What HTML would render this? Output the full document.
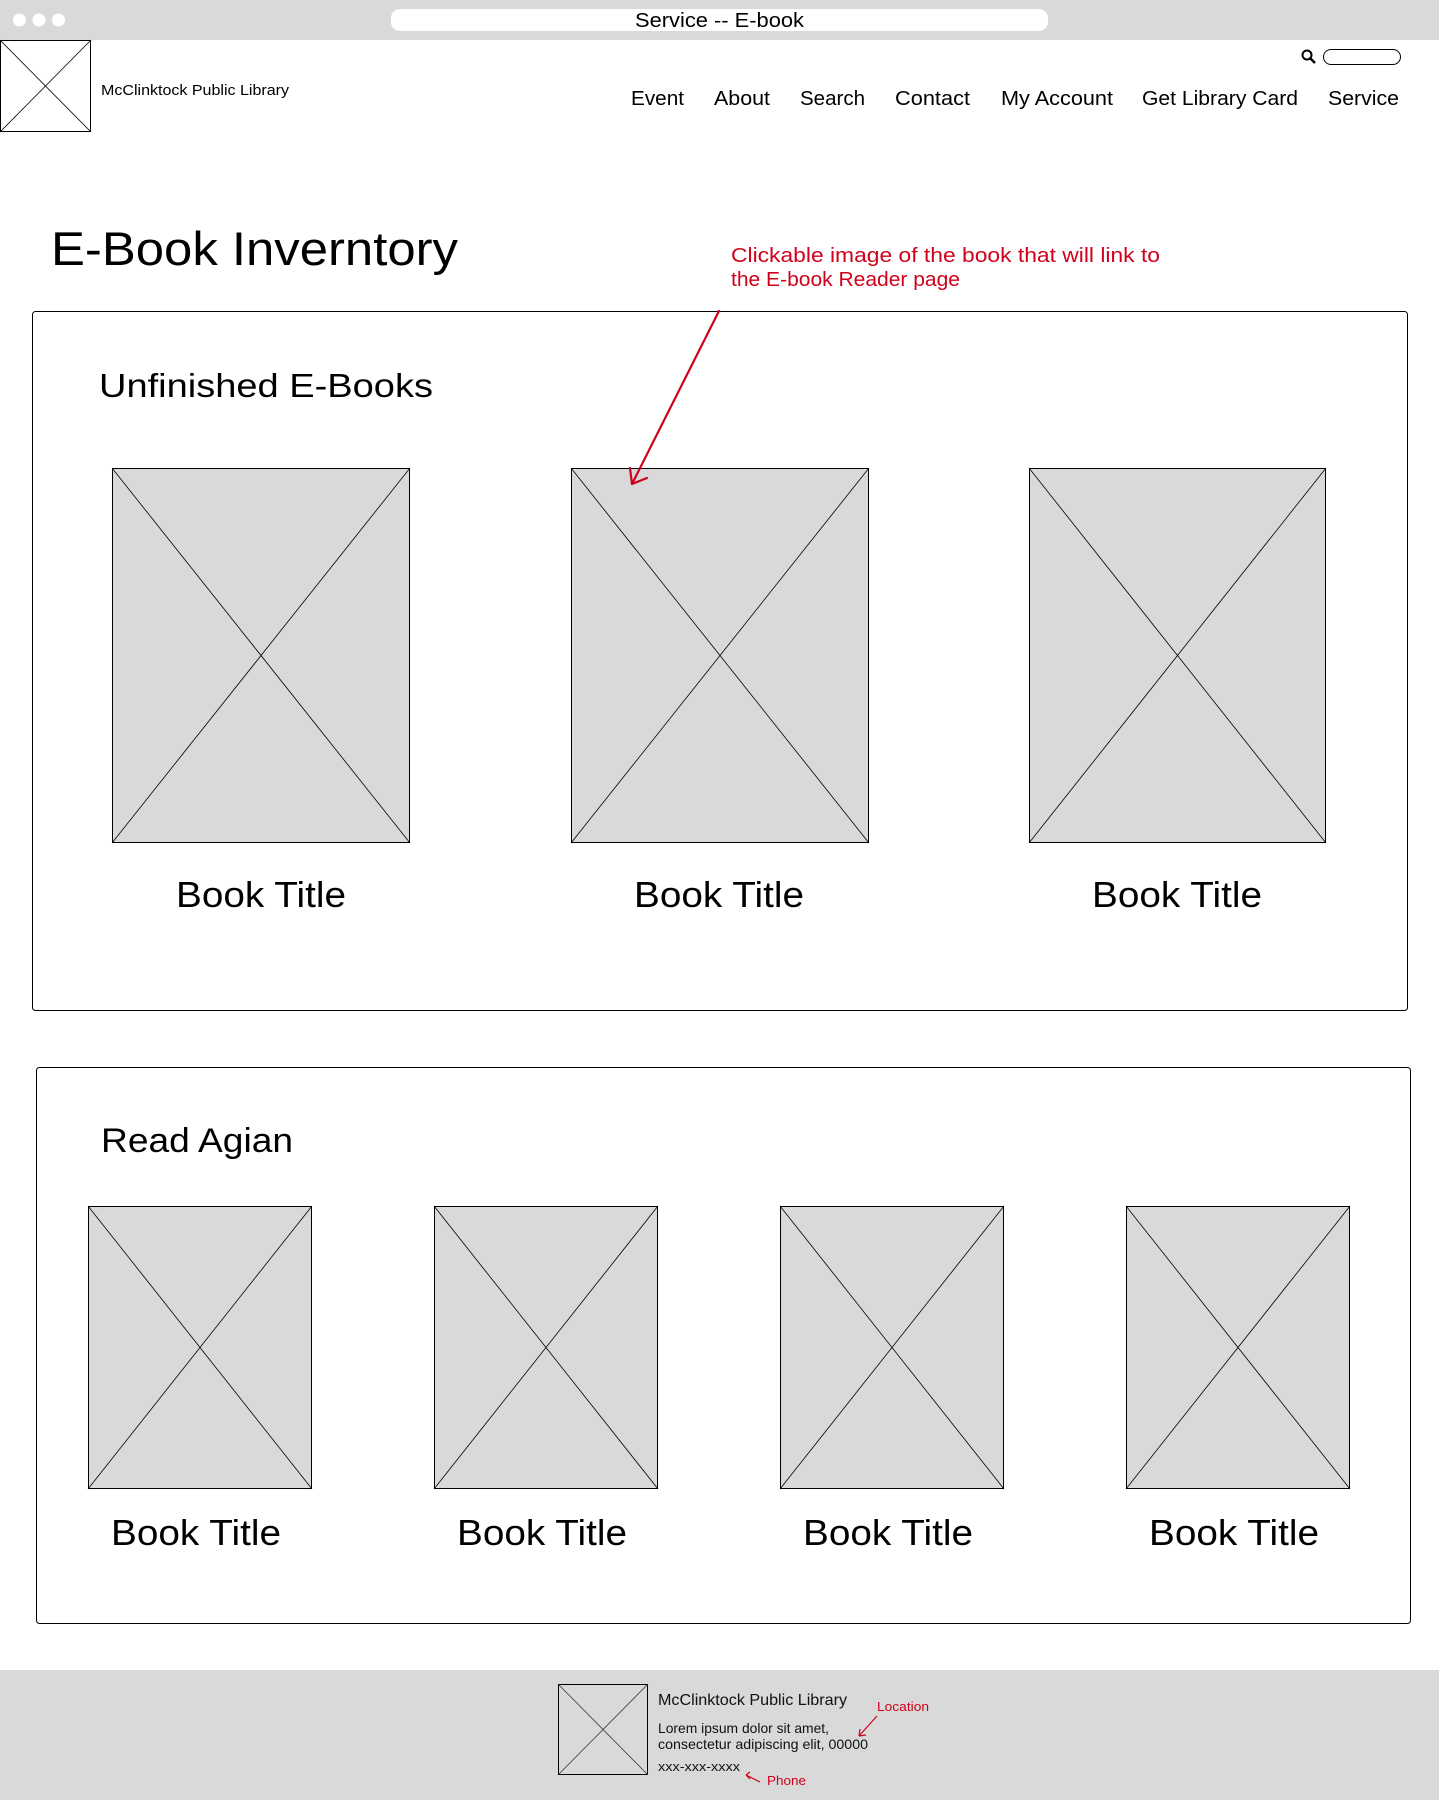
<!DOCTYPE html>
<html><head><meta charset="utf-8"><style>
html,body{margin:0;padding:0;background:#fff;}
svg{display:block;font-family:"Liberation Sans",sans-serif;}
</style></head><body>
<svg width="1439" height="1800" viewBox="0 0 1439 1800" xmlns="http://www.w3.org/2000/svg">
<rect x="0" y="0" width="1439" height="40" fill="#d9d9d9"/>
<circle cx="19.5" cy="20" r="6.5" fill="#fff"/>
<circle cx="39" cy="20" r="6.5" fill="#fff"/>
<circle cx="58.5" cy="20" r="6.5" fill="#fff"/>
<rect x="391" y="9" width="657" height="22" rx="9" fill="#fff"/>
<text x="635" y="27" font-size="20" textLength="169" lengthAdjust="spacingAndGlyphs" fill="#000">Service -- E-book</text>
<!-- logo -->
<rect x="0.5" y="40.5" width="90" height="91" fill="#fff" stroke="#000" stroke-width="1"/>
<path d="M0 40L91 132M91 40L0 132" stroke="#000" stroke-width="0.8"/>
<text x="101" y="95" font-size="15" textLength="188" lengthAdjust="spacingAndGlyphs" fill="#000">McClinktock Public Library</text>
<!-- search -->
<circle cx="1307" cy="55" r="4.5" fill="none" stroke="#000" stroke-width="2"/>
<path d="M1310 58L1315 63" stroke="#000" stroke-width="2.5"/>
<rect x="1323.5" y="49.5" width="77" height="15" rx="7.5" fill="#fff" stroke="#000" stroke-width="1"/>
<g font-size="20" fill="#000">
<text x="631" y="105" textLength="53" lengthAdjust="spacingAndGlyphs">Event</text>
<text x="714" y="105" textLength="56" lengthAdjust="spacingAndGlyphs">About</text>
<text x="800" y="105" textLength="65" lengthAdjust="spacingAndGlyphs">Search</text>
<text x="895" y="105" textLength="75" lengthAdjust="spacingAndGlyphs">Contact</text>
<text x="1001" y="105" textLength="112" lengthAdjust="spacingAndGlyphs">My Account</text>
<text x="1142" y="105" textLength="156" lengthAdjust="spacingAndGlyphs">Get Library Card</text>
<text x="1328" y="105" textLength="71" lengthAdjust="spacingAndGlyphs">Service</text>
</g>
<text x="51" y="265" font-size="47" textLength="407" lengthAdjust="spacingAndGlyphs" fill="#000">E-Book Inverntory</text>
<g font-size="20" fill="#d0021b">
<text x="731" y="262" textLength="429" lengthAdjust="spacingAndGlyphs">Clickable  image  of  the  book  that  will  link  to</text>
<text x="731" y="286" textLength="229" lengthAdjust="spacingAndGlyphs">the E-book Reader page</text>
</g>
<!-- box 1 -->
<rect x="32.5" y="311.5" width="1375" height="699" rx="3" fill="none" stroke="#000" stroke-width="1"/>
<text x="99" y="397" font-size="33" textLength="334" lengthAdjust="spacingAndGlyphs" fill="#000">Unfinished E-Books</text>
<g stroke="#000" stroke-width="1" fill="#d9d9d9">
<rect x="112.5" y="468.5" width="297" height="374"/>
<rect x="571.5" y="468.5" width="297" height="374"/>
<rect x="1029.5" y="468.5" width="296" height="374"/>
<path d="M112 468L410 843M410 468L112 843M571 468L869 843M869 468L571 843M1029 468L1326 843M1326 468L1029 843" stroke-width="0.8" fill="none"/>
</g>
<g font-size="36" fill="#000">
<text x="176" y="907" textLength="170" lengthAdjust="spacingAndGlyphs">Book Title</text>
<text x="634" y="907" textLength="170" lengthAdjust="spacingAndGlyphs">Book Title</text>
<text x="1092" y="907" textLength="170" lengthAdjust="spacingAndGlyphs">Book Title</text>
</g>
<!-- arrow -->
<path d="M719 311L632 484M632 484L630 468M632 484L647 478" stroke="#d0021b" stroke-width="2.2" fill="none" stroke-linecap="round"/>
<!-- box 2 -->
<rect x="36.5" y="1067.5" width="1374" height="556" rx="3" fill="none" stroke="#000" stroke-width="1"/>
<text x="101" y="1152" font-size="34" textLength="192" lengthAdjust="spacingAndGlyphs" fill="#000">Read Agian</text>
<g stroke="#000" stroke-width="1" fill="#d9d9d9">
<rect x="88.5" y="1206.5" width="223" height="282"/>
<rect x="434.5" y="1206.5" width="223" height="282"/>
<rect x="780.5" y="1206.5" width="223" height="282"/>
<rect x="1126.5" y="1206.5" width="223" height="282"/>
<path d="M88 1206L312 1489M312 1206L88 1489M434 1206L658 1489M658 1206L434 1489M780 1206L1004 1489M1004 1206L780 1489M1126 1206L1350 1489M1350 1206L1126 1489" stroke-width="0.8" fill="none"/>
</g>
<g font-size="36" fill="#000">
<text x="111" y="1545" textLength="170" lengthAdjust="spacingAndGlyphs">Book Title</text>
<text x="457" y="1545" textLength="170" lengthAdjust="spacingAndGlyphs">Book Title</text>
<text x="803" y="1545" textLength="170" lengthAdjust="spacingAndGlyphs">Book Title</text>
<text x="1149" y="1545" textLength="170" lengthAdjust="spacingAndGlyphs">Book Title</text>
</g>
<!-- footer -->
<rect x="0" y="1670" width="1439" height="130" fill="#d9d9d9"/>
<rect x="558.5" y="1684.5" width="89" height="90" fill="none" stroke="#000" stroke-width="1"/>
<path d="M558 1684L648 1775M648 1684L558 1775" stroke="#333" stroke-width="0.8"/>
<text x="658" y="1705" font-size="16" textLength="189" lengthAdjust="spacingAndGlyphs" fill="#111">McClinktock Public Library</text>
<text x="658" y="1733" font-size="14" textLength="171" lengthAdjust="spacingAndGlyphs" fill="#111">Lorem ipsum dolor sit amet,</text>
<text x="658" y="1749" font-size="14" textLength="210" lengthAdjust="spacingAndGlyphs" fill="#111">consectetur adipiscing elit, 00000</text>
<text x="658" y="1771" font-size="13" textLength="82" lengthAdjust="spacingAndGlyphs" fill="#111">xxx-xxx-xxxx</text>
<text x="877" y="1711" font-size="13" textLength="52" lengthAdjust="spacingAndGlyphs" fill="#d0021b">Location</text>
<text x="767" y="1785" font-size="13" textLength="39" lengthAdjust="spacingAndGlyphs" fill="#d0021b">Phone</text>
<path d="M877 1716L859 1736M859 1736L860 1729M859 1736L866 1735" stroke="#d0021b" stroke-width="1.2" fill="none"/>
<path d="M760 1782L746 1775M746 1775L750 1772M746 1775L750 1779" stroke="#d0021b" stroke-width="1.2" fill="none"/>
</svg>
</body></html>
